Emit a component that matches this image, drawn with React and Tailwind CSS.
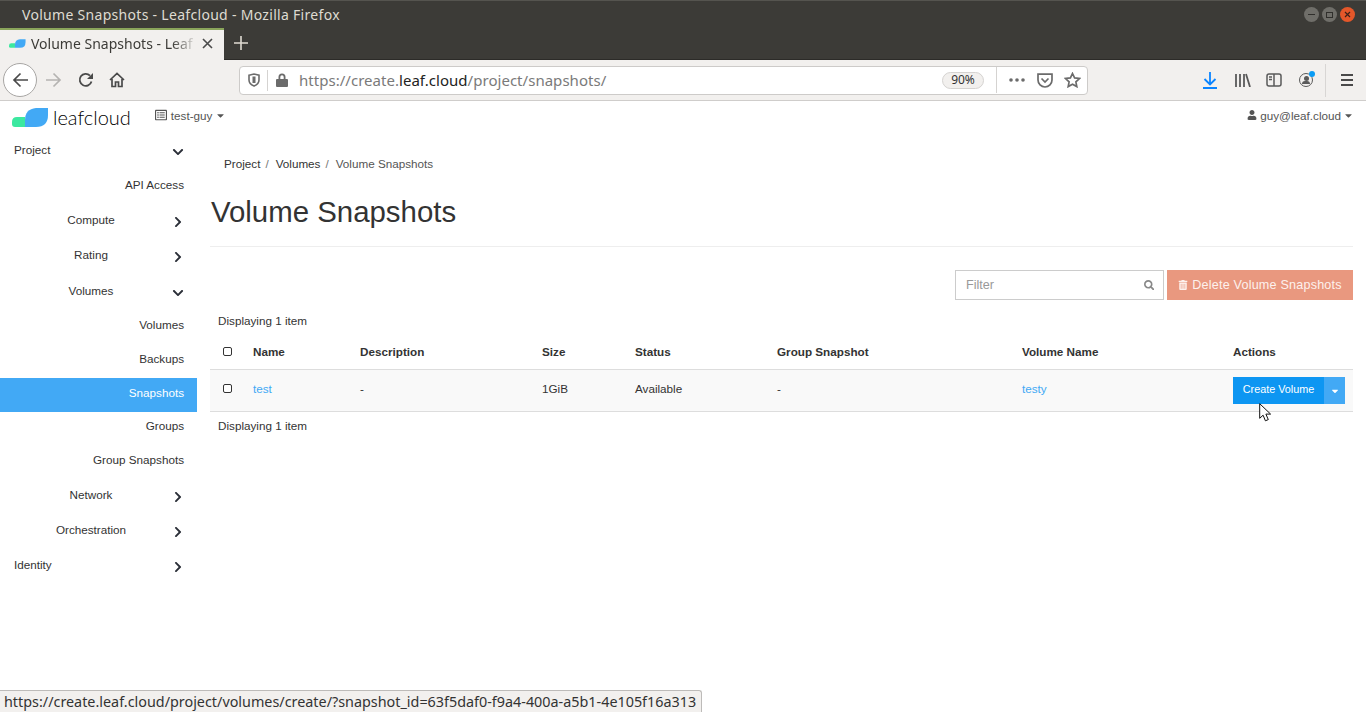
import { FaChevronDown, FaChevronRight, FaUser, FaTrashAlt, FaSearch, FaCaretDown, FaRegListAlt } from 'react-icons/fa';

const navItems = [
  { label: 'Project', kind: 'top', open: true },
  { label: 'API Access', kind: 'leaf' },
  { label: 'Compute', kind: 'group' },
  { label: 'Rating', kind: 'group' },
  { label: 'Volumes', kind: 'group', open: true, low: true },
  { label: 'Volumes', kind: 'sub' },
  { label: 'Backups', kind: 'sub' },
  { label: 'Snapshots', kind: 'sub', active: true },
  { label: 'Groups', kind: 'sub', pulled: true },
  { label: 'Group Snapshots', kind: 'sub', last: true },
  { label: 'Network', kind: 'group' },
  { label: 'Orchestration', kind: 'group' },
  { label: 'Identity', kind: 'top' },
];

const columns = 'grid grid-cols-[43px_107px_182px_93px_142px_245px_211px_1fr] items-center';

function Logo() {
  return (
    <svg width="37" height="19" viewBox="0 0 37 19">
      <path d="M0 16V14Q0 9 5 9H13V19H3Q0 19 0 16Z" fill="#3ce8a0" />
      <path d="M13 19V12Q13 1 24 0H36V7Q36 19 24 19Z" fill="#42a9f5" />
    </svg>
  );
}

function NavRow({ item }) {
  const Chevron = item.open ? FaChevronDown : FaChevronRight;
  if (item.kind === 'top') {
    return (
      <div className="h-[35px] flex items-center justify-between pl-[14px] pr-[13px] text-[11.7px]">
        <span className="-mt-[2px]">{item.label}</span>
        <Chevron className="shrink-0 text-[12px] text-[#2b2f38] mt-[3px]" />
      </div>
    );
  }
  if (item.kind === 'group') {
    return (
      <div className={`h-[35px] flex items-center justify-between pr-[13px] text-[11.7px] ${item.low ? 'pt-[2px]' : ''}`}>
        <span className="w-[172px] pl-[10px] text-center -mt-[2px]">{item.label}</span>
        <Chevron className="shrink-0 text-[12px] text-[#2b2f38] mt-[3px]" />
      </div>
    );
  }
  if (item.active) {
    return (
      <div className="h-[34px] mt-[2px] pb-[4px] flex items-center justify-end pr-[13px] text-[11.7px] bg-[#42a9f5] text-white">
        {item.label}
      </div>
    );
  }
  return (
    <div
      className={`${item.kind === 'sub' ? 'h-[33.8px]' : 'h-[35px] pb-[2px]'} ${item.last ? 'mb-[2px]' : ''} ${item.pulled ? '-mt-[3px]' : ''} flex items-center justify-end pr-[13px] text-[11.7px]`}
    >
      {item.label}
    </div>
  );
}

function Checkbox() {
  return <span className="block w-[9px] h-[9px] ml-[13px] border border-[#333] rounded-[2px] bg-white" />;
}

function TitleBar() {
  return (
    <div className="h-[28px] bg-[#3c3b37] border-t border-[#55544f] flex items-center pl-[22px] pr-[11px] justify-between">
      <span className="text-[14px] text-[#dfdbd2] font-['Noto_Sans',sans-serif] tracking-[0.3px]">
        Volume Snapshots - Leafcloud - Mozilla Firefox
      </span>
      <div className="flex gap-[3px]">
        <span className="w-[15px] h-[15px] rounded-full bg-[#6f6e69] flex items-center justify-center">
          <span className="w-[7px] h-[1px] bg-[#302f2c]" />
        </span>
        <span className="w-[15px] h-[15px] rounded-full bg-[#6f6e69] flex items-center justify-center">
          <span className="w-[7px] h-[6px] border border-[#302f2c]" />
        </span>
        <span className="w-[15px] h-[15px] rounded-full bg-[#e4572a] flex items-center justify-center">
          <svg width="7" height="7" viewBox="0 0 7 7" stroke="#3c2018" strokeWidth="1.2"><path d="M1 1l5 5M6 1l-5 5" /></svg>
        </span>
      </div>
    </div>
  );
}

function TabBar() {
  return (
    <div className="h-[32px] bg-[#3c3b37] flex items-stretch border-b border-[#2c2b28]">
      <div className="w-[224px] bg-[#f2f0ee] border-t-[2px] border-[#8aa55b] flex items-center pl-[9px] pr-[11px] pb-[3px] -mb-[1px]">
        <svg width="17" height="9" viewBox="0 0 37 19" className="shrink-0">
          <path d="M0 16V14Q0 9 5 9H13V19H3Q0 19 0 16Z" fill="#3ce8a0" />
          <path d="M13 19V12Q13 1 24 0H36V7Q36 19 24 19Z" fill="#42a9f5" />
        </svg>
        <span className="ml-[5px] w-[166px] overflow-hidden whitespace-nowrap text-[14px] text-[#3c3b37] font-['Noto_Sans',sans-serif] [mask-image:linear-gradient(to_right,black_85%,transparent)]">
          Volume Snapshots - Leaf
        </span>
        <svg width="11" height="11" viewBox="0 0 11 11" stroke="#4a4a4a" strokeWidth="1.6" className="ml-auto">
          <path d="M1 1l9 9M10 1l-9 9" />
        </svg>
      </div>
      <div className="w-[34px] flex items-center justify-center pb-[2px]">
        <svg width="14" height="14" viewBox="0 0 14 14" stroke="#dfdbd2" strokeWidth="1.6"><path d="M7 0v14M0 7h14" /></svg>
      </div>
    </div>
  );
}

function Toolbar() {
  return (
    <div className="h-[41px] bg-[#f2f0ee] border-b border-[#cfcdcb] flex items-center">
      <div className="ml-[3px] w-[34px] h-[34px] rounded-full border border-[#a8a6a4] bg-white flex items-center justify-center">
        <svg width="17" height="16" viewBox="0 0 17 16" fill="none" stroke="#4a4a4a" strokeWidth="1.7"><path d="M16 8H2M8.5 1.5 2 8l6.5 6.5" /></svg>
      </div>
      <svg width="17" height="16" viewBox="0 0 17 16" fill="none" stroke="#b5b3b1" strokeWidth="1.7" className="ml-[8px]"><path d="M1 8h14M8.5 1.5 15 8l-6.5 6.5" /></svg>
      <svg width="16" height="16" viewBox="0 0 16 16" fill="none" className="ml-[16px]">
        <path d="M13.5 9.5A6 6 0 1 1 12 3.6" stroke="#4a4a4a" strokeWidth="1.8" />
        <path d="M15 1v6H9z" fill="#4a4a4a" />
      </svg>
      <svg width="16" height="16" viewBox="0 0 16 16" fill="none" stroke="#4a4a4a" strokeWidth="1.7" className="ml-[15px]">
        <path d="M1 8 8 1.5 15 8M3 7v7.5h3.5V10h3v4.5H13V7" />
      </svg>
      <div className="ml-[114px] w-[849px] h-[29px] bg-white border border-[#cdcbc9] rounded-[4px] flex items-center pl-[8px] pr-[6px] font-['Noto_Sans',sans-serif]">
        <svg width="12" height="14" viewBox="0 0 12 14" fill="none" stroke="#6b6b6b" strokeWidth="1.6"><path d="M1 2.2 6 1l5 1.2V7c0 3-2.4 5-5 6-2.6-1-5-3-5-6z" /><path d="M6 3.5V10" strokeWidth="3" /></svg>
        <span className="w-px h-[21px] bg-[#d5d3d1] ml-[7px]" />
        <svg width="12" height="14" viewBox="0 0 12 14" className="ml-[8px]"><path d="M2.5 6V4a3.5 3.5 0 0 1 7 0v2H11a1 1 0 0 1 1 1v6a1 1 0 0 1-1 1H1a1 1 0 0 1-1-1V7a1 1 0 0 1 1-1zM4.3 6h3.4V4a1.7 1.7 0 0 0-3.4 0z" fill="#6b6b6b" /></svg>
        <span className="ml-[11px] text-[15px] text-[#7a7a7a] tracking-[0.03px]">
          https://create.<span className="text-[#222]">leaf.cloud</span>/project/snapshots/
        </span>
        <span className="ml-auto w-[42px] h-[17px] rounded-full border border-[#d5d3d1] bg-[#f2f0ee] text-[12px] text-[#333] flex items-center justify-center">90%</span>
        <span className="w-px h-[26px] bg-[#d5d3d1] ml-[12px]" />
        <svg width="16" height="4" viewBox="0 0 16 4" fill="#6b6b6b" className="ml-[12px]"><circle cx="2" cy="2" r="1.8" /><circle cx="8" cy="2" r="1.8" /><circle cx="14" cy="2" r="1.8" /></svg>
        <svg width="16" height="15" viewBox="0 0 16 15" fill="none" stroke="#6b6b6b" strokeWidth="1.7" className="ml-[12px]"><path d="M1 1.2h14V7a7 7 0 0 1-14 0z" /><path d="M4.5 5.5 8 9l3.5-3.5" /></svg>
        <svg width="17" height="16" viewBox="0 0 17 16" fill="none" stroke="#6b6b6b" strokeWidth="1.7" className="ml-[11px]"><path d="m8.5 1.5 2.1 4.4 4.8.6-3.5 3.3.9 4.8-4.3-2.4-4.3 2.4.9-4.8-3.5-3.3 4.8-.6z" /></svg>
      </div>
      <svg width="14" height="17" viewBox="0 0 14 17" fill="none" stroke="#0a84ff" strokeWidth="1.8" className="ml-[115px]"><path d="M7 0v12M1.5 7 7 12.5 12.5 7M0 16h14" /></svg>
      <svg width="16" height="14" viewBox="0 0 16 14" fill="none" stroke="#5a5a5a" strokeWidth="1.8" className="ml-[18px]"><path d="M1 1v13M5 1v13M9 1v13M11 1l4 13" /></svg>
      <svg width="16" height="14" viewBox="0 0 16 14" fill="none" stroke="#5a5a5a" strokeWidth="1.5" className="ml-[15px]"><rect x="1" y="1" width="14" height="12" rx="2" /><path d="M8 1v12" /><path d="M3 4h3M3 6.5h3" /></svg>
      <div className="relative ml-[17px] w-[14px] h-[14px] rounded-full border-[1.5px] border-[#5a5a5a] flex flex-col items-center justify-center">
        <span className="w-[5px] h-[5px] rounded-full bg-[#5a5a5a]" />
        <span className="w-[8px] h-[3px] rounded-t-full bg-[#5a5a5a]" />
        <span className="absolute -top-[3px] -right-[3px] w-[6px] h-[6px] rounded-full bg-[#0a9cf5]" />
      </div>
      <span className="w-px h-[33px] bg-[#d8d6d4] ml-[12px]" />
      <div className="ml-[15px] flex flex-col gap-[3px]">
        <span className="w-[12px] h-[2px] bg-[#4a4a4a]" />
        <span className="w-[12px] h-[2px] bg-[#4a4a4a]" />
        <span className="w-[12px] h-[2px] bg-[#4a4a4a]" />
      </div>
    </div>
  );
}

function TopNav() {
  return (
    <div className="h-[31px] flex items-center pl-[12px] pr-[12px] text-[11.7px]">
      <div className="mt-[2px]"><Logo /></div>
      <span className="ml-[4px] text-[20px] font-light font-['Lato',sans-serif] text-black mt-[1px] leading-none">leafcloud</span>
      <div className="ml-[24px] flex items-center -mt-[2px] text-[#555]">
        <FaRegListAlt className="text-[12px] mr-[4px]" />
        test-guy
        <FaCaretDown className="text-[11px] ml-[3px]" />
      </div>
      <div className="ml-auto flex items-center -mt-[2px] text-[#555]">
        <FaUser className="text-[10px] mr-[3px]" />
        guy@leaf.cloud
        <FaCaretDown className="text-[11px] ml-[2px]" />
      </div>
    </div>
  );
}

export default function App() {
  return (
    <div className="relative h-[712px] overflow-hidden bg-white text-[#333] font-['Liberation_Sans',sans-serif]">
      <TitleBar />
      <TabBar />
      <Toolbar />
      <TopNav />
      <div className="flex">
        <aside className="w-[197px] shrink-0 pt-[1px]">
          {navItems.map((item, i) => (
            <NavRow key={i} item={item} />
          ))}
        </aside>
        <main className="flex-1 pl-[13px] pr-[13px]">
          <div className="pl-[14px] pt-[23px] text-[11.7px] leading-[18px] flex">
            <span>Project</span>
            <span className="ml-[5px] mr-[7px] text-[#777]">/</span>
            <span>Volumes</span>
            <span className="ml-[5px] mr-[7px] text-[#777]">/</span>
            <span className="text-[#555]">Volume Snapshots</span>
          </div>
          <div className="border-b border-[#eee] pb-[16px] mt-[21px]">
            <h1 className="text-[29.4px] leading-[36px] pl-[1px] text-[#333]">Volume Snapshots</h1>
          </div>
          <div className="mt-[23px] flex justify-end gap-[3px]">
            <div className="w-[209px] h-[30px] border border-[#ccc] flex items-center justify-between pl-[10px] pr-[9px] text-[12.6px] text-[#999]">
              Filter
              <FaSearch className="text-[10.5px] text-[#888]" />
            </div>
            <div className="w-[186px] h-[30px] bg-[#e9987f] text-[#fdf1ed] text-[12.6px] tracking-[0.2px] flex items-center justify-center">
              <FaTrashAlt className="text-[10px] mr-[4px]" />
              Delete Volume Snapshots
            </div>
          </div>
          <div className="mt-[12px] pl-[8px] text-[11.7px] leading-[18px]">Displaying 1 item</div>
          <div className={`${columns} h-[38px] pt-[2px] mt-[2px] border-b border-[#ddd] text-[11.7px] font-bold`}>
            <Checkbox />
            <span>Name</span>
            <span>Description</span>
            <span>Size</span>
            <span>Status</span>
            <span>Group Snapshot</span>
            <span>Volume Name</span>
            <span>Actions</span>
          </div>
          <div className={`${columns} h-[42px] pb-[4px] border-b border-[#ddd] bg-[#f9f9f9] text-[11.7px]`}>
            <Checkbox />
            <span className="text-[#42a9f5]">test</span>
            <span>-</span>
            <span>1GiB</span>
            <span>Available</span>
            <span>-</span>
            <span className="text-[#42a9f5]">testy</span>
            <div className="flex h-[27px] mt-[4px] text-[10.8px] text-white">
              <span className="w-[91px] pb-[2px] bg-[#0d96f2] flex items-center justify-center">Create Volume</span>
              <span className="w-[21px] bg-[#42a9f5] flex items-center justify-center">
                <FaCaretDown className="text-[10px]" />
              </span>
            </div>
          </div>
          <div className="mt-[5px] pl-[8px] text-[11.7px] leading-[18px]">Displaying 1 item</div>
        </main>
      </div>

      <div className="absolute left-0 bottom-0 h-[22px] pl-[4px] pr-[5px] bg-[#f2f0ee] border-t border-r border-[#bdbbb9] rounded-tr-[3px] flex items-center text-[14.37px] text-[#333] font-['Noto_Sans',sans-serif] whitespace-nowrap">
        https://create.leaf.cloud/project/volumes/create/?snapshot_id=63f5daf0-f9a4-400a-a5b1-4e105f16a313
      </div>

      <svg width="13" height="19" viewBox="0 0 13 19" className="absolute left-[1259px] top-[403px]">
        <path d="M.7.7v14.6l3.4-3.1 2.3 5.6 2.9-1.2-2.4-5.5h4.7z" fill="#fff" stroke="#111" strokeWidth="1" />
      </svg>
    </div>
  );
}
